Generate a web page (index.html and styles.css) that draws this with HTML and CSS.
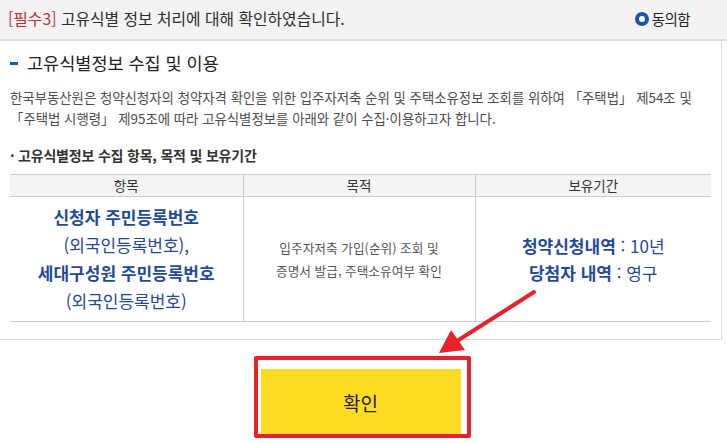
FILE: index.html
```html
<!DOCTYPE html>
<html lang="ko">
<head>
<meta charset="utf-8">
<link rel="stylesheet" href="styles.css">
</head>
<body>
<div class="page">
  <div class="topbar">
    <div class="title"><span class="req">[필수3]</span> 고유식별 정보 처리에 대해 확인하였습니다.</div>
    <label class="agree"><span class="radio"></span>동의함</label>
  </div>
  <div class="box">
    <h2 class="heading"><span class="dash"></span>고유식별정보 수집 및 이용</h2>
    <p class="desc">한국부동산원은 청약신청자의 청약자격 확인을 위한 입주자저축 순위 및 주택소유정보 조회를 위하여 「주택법」 제54조 및<br>「주택법 시행령」 제95조에 따라 고유식별정보를 아래와 같이 수집·이용하고자 합니다.</p>
    <p class="sub">· 고유식별정보 수집 항목, 목적 및 보유기간</p>
    <table class="info">
      <colgroup><col class="c1"><col class="c2"><col class="c3"></colgroup>
      <thead>
        <tr><th>항목</th><th>목적</th><th>보유기간</th></tr>
      </thead>
      <tbody>
        <tr>
          <td class="items"><b>신청자 주민등록번호</b><br><span>(외국인등록번호),</span><br><b>세대구성원 주민등록번호</b><br><span>(외국인등록번호)</span></td>
          <td class="purpose">입주자저축 가입(순위) 조회 및<br>증명서 발급, 주택소유여부 확인</td>
          <td class="period"><b>청약신청내역</b> : 10년<br><b>당첨자 내역</b> : 영구</td>
        </tr>
      </tbody>
    </table>
  </div>
  <div class="actions">
    <div class="btn-wrap">
      <button class="confirm" type="button">확인</button>
      <div class="highlight"></div>
    </div>
  </div>
  <svg class="arrow" width="727" height="443" viewBox="0 0 727 443">
    <line x1="534" y1="292" x2="457" y2="341" stroke="#e8212a" stroke-width="4" stroke-linecap="round"/>
    <polygon points="439,353 451,330 465,350" fill="#e8212a"/>
  </svg>
</div>
</body>
</html>
```

FILE: styles.css
```css
* { box-sizing: border-box; }
html, body { margin: 0; padding: 0; background: #fff; }
body {
  font-family: "Noto Sans CJK KR", "Noto Sans", sans-serif;
  color: #333;
  width: 727px;
  height: 443px;
  overflow: hidden;
}
.page { position: relative; width: 727px; height: 443px; }

.topbar {
  height: 41px;
  background: #f3f3f3;
  border-bottom: 2px solid #dcdcdc;
  display: flex;
  align-items: center;
  justify-content: space-between;
  padding: 0 37px 2px 8px;
}
.title { font-size: 15.8px; color: #2b2b2b; }
.req { color: #b5303a; }
.agree {
  display: flex;
  align-items: center;
  font-size: 14.5px;
  letter-spacing: -0.6px;
  color: #222;
}
.radio {
  width: 14px;
  height: 14px;
  border-radius: 50%;
  border: 4px solid #1a55b2;
  background: #fff;
  margin-right: 3px;
}

.box {
  width: 722px;
  border-right: 1px solid #dcdcdc;
  border-bottom: 1px solid #dcdcdc;
  padding: 10px 10px 17px 10px;
}
.heading {
  margin: 0;
  font-size: 17.5px;
  font-weight: 400;
  line-height: 24px;
  color: #222;
  display: flex;
  align-items: center;
}
.dash {
  width: 8px;
  height: 3px;
  background: #1a55b2;
  margin-right: 9px;
}
.desc {
  margin: 12px 0 0 0;
  font-size: 13.4px;
  line-height: 21px;
  color: #4d4d4d;
  letter-spacing: 0;
  white-space: nowrap;
}
.sub {
  margin: 16px 0 0 0;
  font-size: 14px;
  line-height: 20px;
  color: #333;
  font-weight: 700;
  letter-spacing: -0.2px;
}
.info {
  margin-top: 9px;
  width: 701px;
  border-collapse: collapse;
  table-layout: fixed;
  border-top: 1px solid #ccc;
  border-bottom: 1px solid #ccc;
}
.c1 { width: 233px; }
.c2 { width: 232px; }
.c3 { width: 236px; }
.info th {
  background: #f4f4f4;
  font-size: 13.5px;
  font-weight: 400;
  color: #333;
  height: 22px;
  padding: 0;
  line-height: 21px;
  border-bottom: 1px solid #ccc;
}
.info th + th, .info td + td { border-left: 1px solid #ccc; }
.info td {
  text-align: center;
  vertical-align: middle;
  padding: 0;
  height: 125px;
}
.items {
  font-size: 17px;
  line-height: 28px;
  color: #1f4a9a;
}
.items b { font-weight: 700; }
.purpose {
  font-size: 12.7px;
  line-height: 23px;
  color: #555;
  letter-spacing: 0;
}
.period {
  font-size: 17px;
  line-height: 27px;
  color: #1f4a9a;
}
.period b { font-weight: 700; }

.actions {
  width: 721px;
  display: flex;
  justify-content: center;
  padding-top: 29px;
}
.btn-wrap { position: relative; }
.confirm {
  display: block;
  width: 200px;
  height: 66px;
  background: #fddb22;
  border: 0;
  font-family: "Noto Sans CJK KR", "Noto Sans", sans-serif;
  font-size: 19px;
  color: #1e1e1e;
  padding: 0;
}
.highlight {
  position: absolute;
  left: -7px;
  top: -13px;
  width: 217px;
  height: 82px;
  border: 4px solid #e8212a;
  border-radius: 2px;
}
.arrow {
  position: absolute;
  left: 0;
  top: 0;
  pointer-events: none;
}
```
